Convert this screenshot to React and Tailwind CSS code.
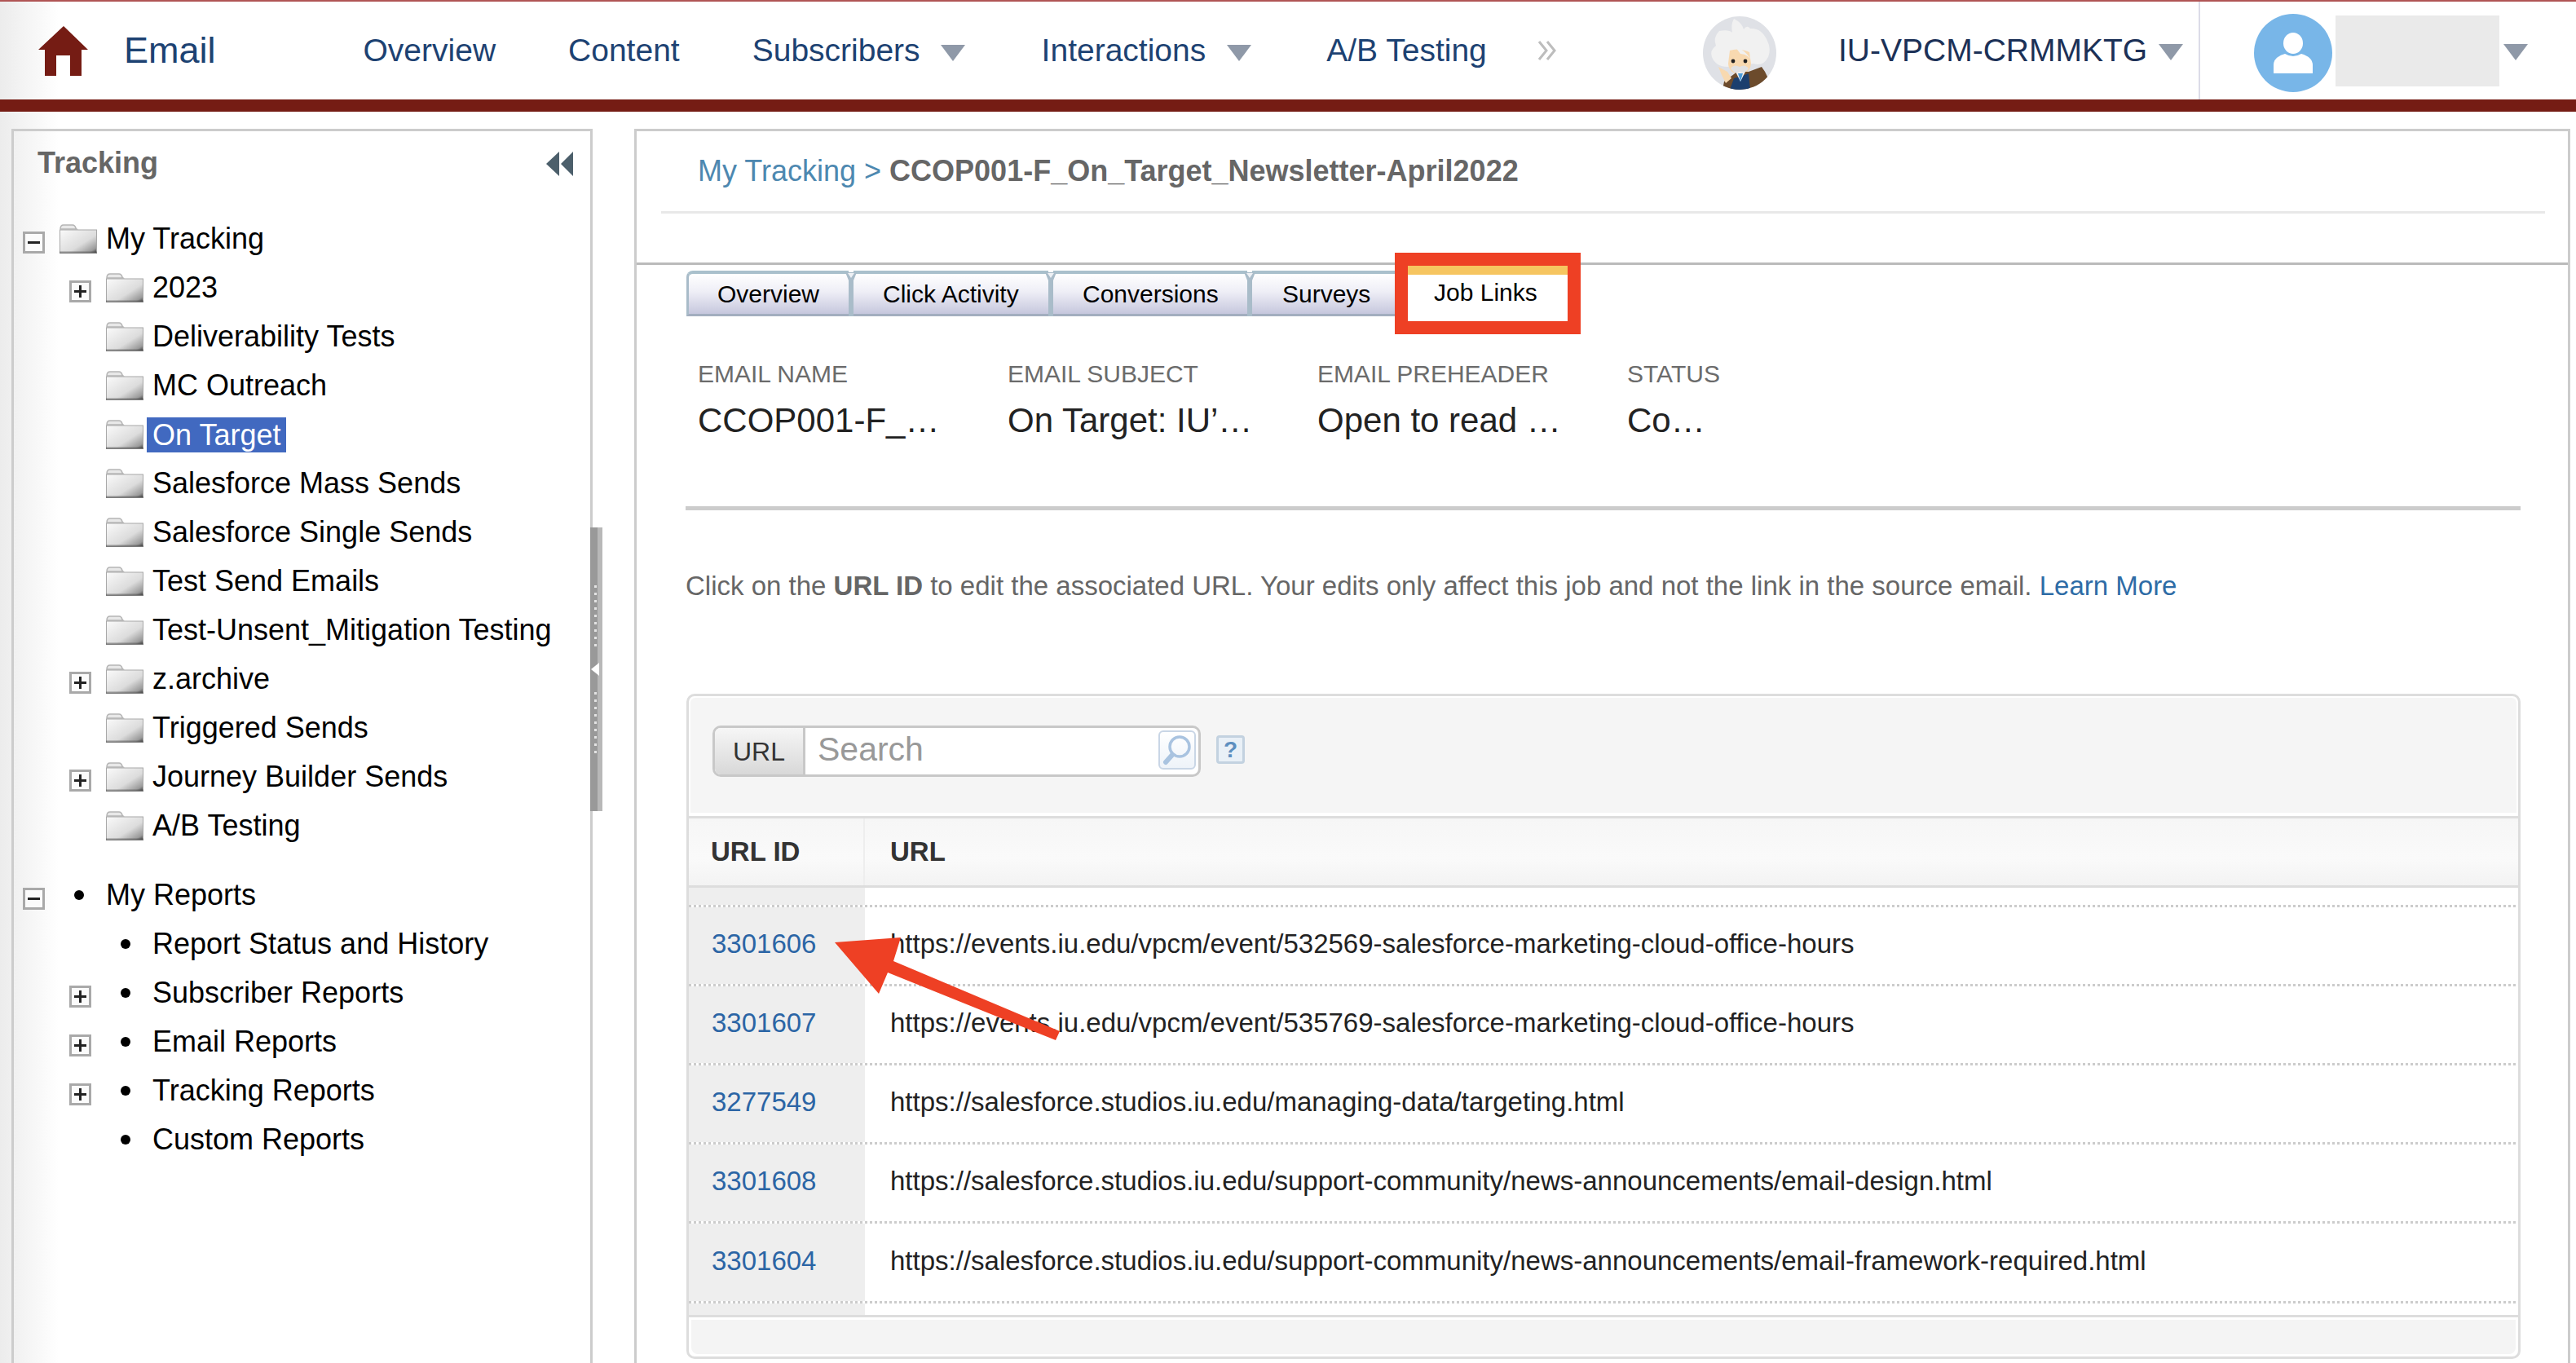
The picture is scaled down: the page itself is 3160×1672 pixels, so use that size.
import React from "react";

const trackingRows = [
  { label: "My Tracking", level: 0, toggle: "minus" },
  { label: "2023", level: 1, toggle: "plus" },
  { label: "Deliverability Tests", level: 1 },
  { label: "MC Outreach", level: 1 },
  { label: "On Target", level: 1, selected: true },
  { label: "Salesforce Mass Sends", level: 1 },
  { label: "Salesforce Single Sends", level: 1 },
  { label: "Test Send Emails", level: 1 },
  { label: "Test-Unsent_Mitigation Testing", level: 1 },
  { label: "z.archive", level: 1, toggle: "plus" },
  { label: "Triggered Sends", level: 1 },
  { label: "Journey Builder Sends", level: 1, toggle: "plus" },
  { label: "A/B Testing", level: 1 },
];

const reportRows = [
  { label: "My Reports", level: 0, toggle: "minus" },
  { label: "Report Status and History", level: 1 },
  { label: "Subscriber Reports", level: 1, toggle: "plus" },
  { label: "Email Reports", level: 1, toggle: "plus" },
  { label: "Tracking Reports", level: 1, toggle: "plus" },
  { label: "Custom Reports", level: 1 },
];

const links = [
  ["3301606", "https://events.iu.edu/vpcm/event/532569-salesforce-marketing-cloud-office-hours"],
  ["3301607", "https://events.iu.edu/vpcm/event/535769-salesforce-marketing-cloud-office-hours"],
  ["3277549", "https://salesforce.studios.iu.edu/managing-data/targeting.html"],
  ["3301608", "https://salesforce.studios.iu.edu/support-community/news-announcements/email-design.html"],
  ["3301604", "https://salesforce.studios.iu.edu/support-community/news-announcements/email-framework-required.html"],
];

const info = [
  ["EMAIL NAME", "CCOP001-F_…"],
  ["EMAIL SUBJECT", "On Target: IU’…"],
  ["EMAIL PREHEADER", "Open to read …"],
  ["STATUS", "Co…"],
];

function Triangle({ className }) {
  return (
    <svg width="30" height="20" viewBox="0 0 30 20" className={className}>
      <path d="M0 0 H30 L15 20 Z" fill="#8f99a8" />
    </svg>
  );
}

function Folder() {
  return (
    <svg width="46" height="36" viewBox="0 0 46 36">
      <defs>
        <linearGradient id="folderFill" x1="0" y1="0" x2="1" y2="1">
          <stop offset="0" stopColor="#fafafa" />
          <stop offset="0.6" stopColor="#dcdcdc" />
          <stop offset="0.88" stopColor="#9a9a9a" />
          <stop offset="1" stopColor="#333" />
        </linearGradient>
      </defs>
      <path d="M1 6 Q1 1 5 1 H16 Q19 1 20 5 L21 6 Z" fill="#e8e8e8" stroke="#b5b5b5" strokeWidth="1.5" />
      <rect x="0.5" y="7" width="45" height="28.5" fill="url(#folderFill)" stroke="#a8a8a8" />
      <rect x="0" y="33.5" width="46" height="2.5" fill="#555" opacity="0.55" />
    </svg>
  );
}

function Toggle({ type }) {
  return (
    <div className="w-[27px] h-[27px] border-[3px] border-[#a9a9a9] bg-[#fbfbfb] flex items-center justify-center">
      <svg width="17" height="17" viewBox="0 0 17 17">
        <rect x="1" y="7" width="15" height="3" fill="#222" />
        {type === "plus" && <rect x="7" y="1" width="3" height="15" fill="#222" />}
      </svg>
    </div>
  );
}

function TreeRow({ row, bullet }) {
  return (
    <div className={`flex items-center h-[60px] ${row.level === 1 ? "pl-[57px]" : ""}`}>
      <div className="w-[45px] shrink-0 pt-[9px]">{row.toggle && <Toggle type={row.toggle} />}</div>
      <div className="w-[57px] shrink-0">
        {bullet ? (
          <div className="w-[12px] h-[12px] rounded-full bg-black ml-[18px]" />
        ) : (
          <Folder />
        )}
      </div>
      {row.selected ? (
        <span className="-ml-[7px] px-[7px] h-[43px] leading-[43px] bg-[#4169c0] text-white">{row.label}</span>
      ) : (
        <span className="text-black">{row.label}</span>
      )}
    </div>
  );
}

function Einstein() {
  return (
    <svg width="90" height="90" viewBox="0 0 90 90" className="mt-[6px]">
      <defs>
        <clipPath id="einsteinClip">
          <circle cx="45" cy="45" r="45" />
        </clipPath>
      </defs>
      <g clipPath="url(#einsteinClip)">
        <rect width="90" height="90" fill="#dfe1e6" />
        <path
          d="M38 3 Q48 8 50 16 Q54 10 58 15 Q72 14 79 30 Q84 40 80 50 Q74 62 62 58 L30 62 Q16 62 11 50 Q8 42 16 36 Q12 26 20 18 Q32 16 36 20 Q34 10 38 3 Z"
          fill="#f1f1f1"
        />
        <path d="M33 42 Q44 38 57 44 L59 58 Q58 70 45 71 Q32 70 31 58 Z" fill="#f8d9b0" />
        <path d="M40 38 Q52 40 62 58 Q56 46 46 46 Z" fill="#f1f1f1" />
        <circle cx="37" cy="55" r="2.4" fill="#222" />
        <circle cx="52" cy="55" r="2.4" fill="#222" />
        <path d="M26 80 L42 68 L56 68 L72 62 Q80 72 84 90 H24 Z" fill="#6c4b2c" />
        <path d="M33 90 L38 76 L46 74 L56 70 L58 90 Z" fill="#1c3f6e" />
        <path d="M40 68 L46 80 L52 68 Z" fill="#f4f4f4" />
        <path d="M43 70 L46 80 L49 70 Z" fill="#4a9ad8" />
        <path d="M34 64 Q38 58 45 62 Q52 58 56 64 Q50 72 45 68 Q40 72 34 64 Z" fill="#e2e2e2" />
        <path d="M19 62 L30 68 L35 76 L28 82 L23 72 Z" fill="#f8d9b0" />
      </g>
    </svg>
  );
}

function Avatar() {
  return (
    <div className="w-[96px] h-[96px] rounded-full bg-[#78b6e8] flex items-center justify-center mt-[6px]">
      <svg width="50" height="50" viewBox="0 0 50 50">
        <ellipse cx="25" cy="13" rx="12" ry="13" fill="#fff" />
        <path d="M1 50 V40 Q1 30 15 26 Q25 32 35 26 Q49 30 49 40 V50 Z" fill="#fff" />
      </svg>
    </div>
  );
}

function Dash() {
  return <div className="h-[3px] bg-[repeating-linear-gradient(90deg,#cccccc_0,#cccccc_3px,transparent_3px,transparent_6px)]" />;
}

function TabSep() {
  return (
    <svg width="14" height="56" viewBox="0 0 14 56" className="-mx-[4px] shrink-0 relative">
      <path d="M0 2 H14 L10 12 V56 H4 V12 Z" fill="#a9bcc9" />
      <path d="M3 3 H11 L7 9 Z" fill="#eef1f5" />
    </svg>
  );
}

function Tab({ label, className }) {
  return (
    <div className={`h-[56px] border-t-[4px] border-b-[3px] border-t-[#a9c0cc] border-b-[#a3aebf] bg-[linear-gradient(180deg,#ffffff_0%,#eeeef6_45%,#c6c7dd_100%)] flex items-center text-black ${className}`}>
      {label}
    </div>
  );
}

export default function App() {
  return (
    <div className="relative w-[3160px] h-[1672px] overflow-hidden flex flex-col font-['Liberation_Sans',Arial,sans-serif] bg-[linear-gradient(90deg,#ececec_0,#ffffff_72px)]">
      {/* top nav */}
      <div className="h-[122px] shrink-0 border-t-2 border-[#b05555] flex items-center text-[39px] text-[#1d4272]">
        <svg width="61" height="61" viewBox="0 0 61 61" className="ml-[47px] shrink-0">
          <path d="M31 0 L61 29 H53 V61 H39 V36 H22 V61 H8 V29 H0 Z" fill="#751c14" />
        </svg>
        <span className="ml-[44px] text-[45px]">Email</span>
        <span className="ml-[181px]">Overview</span>
        <span className="ml-[89px]">Content</span>
        <span className="ml-[89px]">Subscribers</span>
        <Triangle className="ml-[25px] mt-[6px]" />
        <span className="ml-[94px]">Interactions</span>
        <Triangle className="ml-[26px] mt-[6px]" />
        <span className="ml-[92px]">A/B Testing</span>
        <svg width="24" height="26" viewBox="0 0 24 26" className="ml-[62px]" fill="none" stroke="#bdbdbd" strokeWidth="3">
          <path d="M2 2 L11 13 L2 24 M12 2 L21 13 L12 24" />
        </svg>
        <div className="ml-auto w-[1071px] h-full flex items-center">
          <Einstein />
          <span className="ml-[76px] text-[#1c3157]">IU-VPCM-CRMMKTG</span>
          <Triangle className="ml-[14px] mt-[4px]" />
          <div className="ml-[19px] w-[2px] self-stretch bg-[#dcdce8]" />
          <div className="ml-[66px]"><Avatar /></div>
          <div className="ml-[4px] w-[201px] h-[87px] bg-[#eaeaea]" />
          <Triangle className="ml-[5px] mt-[4px]" />
        </div>
      </div>
      <div className="h-[15px] shrink-0 bg-[#751c14]" />

      <div className="flex-1 min-h-0 flex pt-[21px] pl-[14px]">
        {/* sidebar */}
        <div className="relative w-[713px] shrink-0 border-[3px] border-b-0 border-[#cccccc] text-[36px]">
          <div className="h-[102px] pl-[29px] pr-[20px] flex items-center justify-between">
            <span className="font-bold text-[#666666] pb-[24px]">Tracking</span>
            <svg width="34" height="30" viewBox="0 0 34 30" className="mb-[22px]">
              <path d="M16 0 V30 L0 15 Z M33 0 V30 L18 15 Z" fill="#4c5f6b" />
            </svg>
          </div>
          <div className="pl-[11px]">
            {trackingRows.map((row) => (
              <TreeRow key={row.label} row={row} />
            ))}
            <div className="mt-[25px]">
              {reportRows.map((row) => (
                <TreeRow key={row.label} row={row} bullet />
              ))}
            </div>
          </div>
          {/* collapse handle */}
          <div className="absolute -right-[15px] top-[486px] w-[15px] h-[348px] flex bg-[linear-gradient(90deg,#999999_60%,#b8b8b8_60%)]">
            <div className="w-[15px] flex flex-col items-center justify-center gap-[6px] pr-[3px]">
              {[0, 1, 2, 3, 4, 5, 6, 7, 8].map((i) => (
                <div key={i} className="w-[3px] h-[3px] bg-[#e4e4e4]" />
              ))}
              <svg width="10" height="16" viewBox="0 0 10 16" className="my-[14px]">
                <path d="M10 0 V16 L0 8 Z" fill="#ffffff" />
              </svg>
              {[0, 1, 2, 3, 4, 5, 6, 7, 8].map((i) => (
                <div key={i} className="w-[3px] h-[3px] bg-[#e4e4e4]" />
              ))}
            </div>
          </div>
        </div>

        {/* main panel */}
        <div className="ml-[51px] w-[2375px] shrink-0 border-[3px] border-b-0 border-[#cccccc] bg-white">
          <div className="h-[98px] pl-[75px] flex items-center text-[36px]">
            <span className="text-[#4d88b0]">My Tracking &gt;&nbsp;</span>
            <span className="font-bold text-[#666666]">CCOP001-F_On_Target_Newsletter-April2022</span>
          </div>
          <div className="h-[3px] ml-[30px] mr-[28px] bg-[#e8e8e8]" />
          <div className="h-[3px] mt-[60px] bg-[#bbbbbb]" />

          {/* tabs */}
          <div className="mt-[7px] h-[56px] pl-[61px] flex items-start text-[30px]">
            <Tab label="Overview" className="w-[199px] pl-[35px] rounded-tl-[8px] border-l-[3px] border-l-[#a9bcc9]" />
            <TabSep />
            <Tab label="Click Activity" className="w-[239px] pl-[36px]" />
            <TabSep />
            <Tab label="Conversions" className="w-[238px] pl-[36px]" />
            <TabSep />
            <Tab label="Surveys" className="w-[191px] pl-[37px]" />
            <div className="relative -mt-[6px] w-[196px] h-[68px] bg-white shrink-0">
              <div className="h-[11px] bg-[#f6c560]" />
              <div className="h-[42px] pl-[32px] flex items-center text-black">Job Links</div>
              <div className="absolute -inset-[16px] border-[16px] border-[#ee4024]" />
            </div>
          </div>

          {/* email info */}
          <div className="mt-[52px] pl-[75px] flex">
            {info.map(([label, value]) => (
              <div key={label} className="w-[380px] shrink-0">
                <div className="h-[38px] leading-[38px] text-[30px] text-[#6b6b6b]">{label}</div>
                <div className="mt-[13px] h-[50px] leading-[50px] text-[42px] text-[#222222] whitespace-nowrap">{value}</div>
              </div>
            ))}
          </div>
          <div className="mt-[80px] ml-[60px] mr-[58px] h-[5px] bg-[#cccccc]" />

          <div className="mt-[73px] ml-[60px] h-[40px] leading-[40px] text-[33px] text-[#666666] whitespace-nowrap">
            Click on the <span className="font-bold">URL ID</span> to edit the associated URL. Your edits only affect this job and not the link in the source email.{" "}
            <span className="text-[#2e6ca6]">Learn More</span>
          </div>

          {/* links table */}
          <div className="mt-[112px] ml-[61px] mr-[58px] h-[816px] border-[3px] border-[#dddddd] rounded-[10px] text-[33px]">
            <div className="h-[141px] mx-[2px] mt-[2px] bg-[#f5f5f5] rounded-t-[6px] pt-[34px] pl-[27px] flex items-start">
              <div className="flex w-[599px] h-[63px] border-[3px] border-[#c8c8c8] rounded-[10px] bg-white">
                <div className="w-[111px] shrink-0 border-r-[3px] border-[#c8c8c8] rounded-l-[7px] bg-[linear-gradient(180deg,#f6f6f6,#d8d8d8)] flex items-center justify-center text-[32px] text-[#333333]">
                  URL
                </div>
                <div className="flex-1 pl-[15px] text-[41px] leading-[52px] text-[#999999]">Search</div>
                <div className="w-[46px] h-[48px] mr-[3px] mt-[3px] border-2 border-[#c9d6e6] rounded-[6px] bg-[linear-gradient(180deg,#ffffff,#eef3f9)] flex items-center justify-center">
                  <svg width="36" height="38" viewBox="0 0 36 38" fill="none">
                    <circle cx="21" cy="15" r="12" stroke="#a9c3e0" strokeWidth="3.5" />
                    <path d="M12 25 L4 34" stroke="#a9c3e0" strokeWidth="6" strokeLinecap="round" />
                  </svg>
                </div>
              </div>
              <div className="ml-[19px] mt-[12px] w-[35px] h-[35px] border-[3px] border-[#c3d2e0] rounded-[4px] bg-[#e9f0f7] flex items-center justify-center text-[28px] leading-none font-bold text-[#5d8fc0]">
                ?
              </div>
            </div>
            <div className="mt-[4px] h-[3px] bg-[#dddddd]" />
            <div className="h-[82px] flex items-center font-bold text-[#333333] bg-[linear-gradient(180deg,#f6f6f6,#fafafa_60%,#f3f3f3)]">
              <div className="w-[216px] shrink-0 h-full border-r-2 border-[#eeeeee] pl-[27px] flex items-center">URL ID</div>
              <div className="pl-[31px]">URL</div>
            </div>
            <div className="h-[3px] bg-[#dddddd]" />

            <div className="h-[21px]">
              <div className="w-[216px] h-full bg-[#eeeeee]" />
            </div>
            {links.map(([id, url], i) => (
              <div key={id}>
                <Dash />
                <div className={`flex items-center ${i === 4 ? "h-[95px]" : "h-[94px]"}`}>
                  <div className="w-[216px] h-full shrink-0 bg-[#eeeeee] pl-[28px] pb-[4px] flex items-center text-[#2b65a5]">{id}</div>
                  <div className="pl-[31px] pb-[4px] text-[#222222] whitespace-nowrap">{url}</div>
                </div>
              </div>
            ))}
            <Dash />
            <div className="h-[14px]">
              <div className="w-[216px] h-full bg-[#eeeeee]" />
            </div>
            <div className="h-[3px] bg-[#dddddd]" />
            <div className="h-[42px] mt-[3px] mx-[3px] bg-[#f4f4f4] rounded-b-[8px]" />
          </div>
        </div>
      </div>

      {/* annotation arrow */}
      <svg className="absolute inset-0 pointer-events-none" width="3160" height="1672" viewBox="0 0 3160 1672">
        <path d="M1024 1156 L1105 1150 L1096 1179 L1300 1265 L1295 1276 L1089 1193 L1078 1219 Z" fill="#ee4024" />
      </svg>
    </div>
  );
}
